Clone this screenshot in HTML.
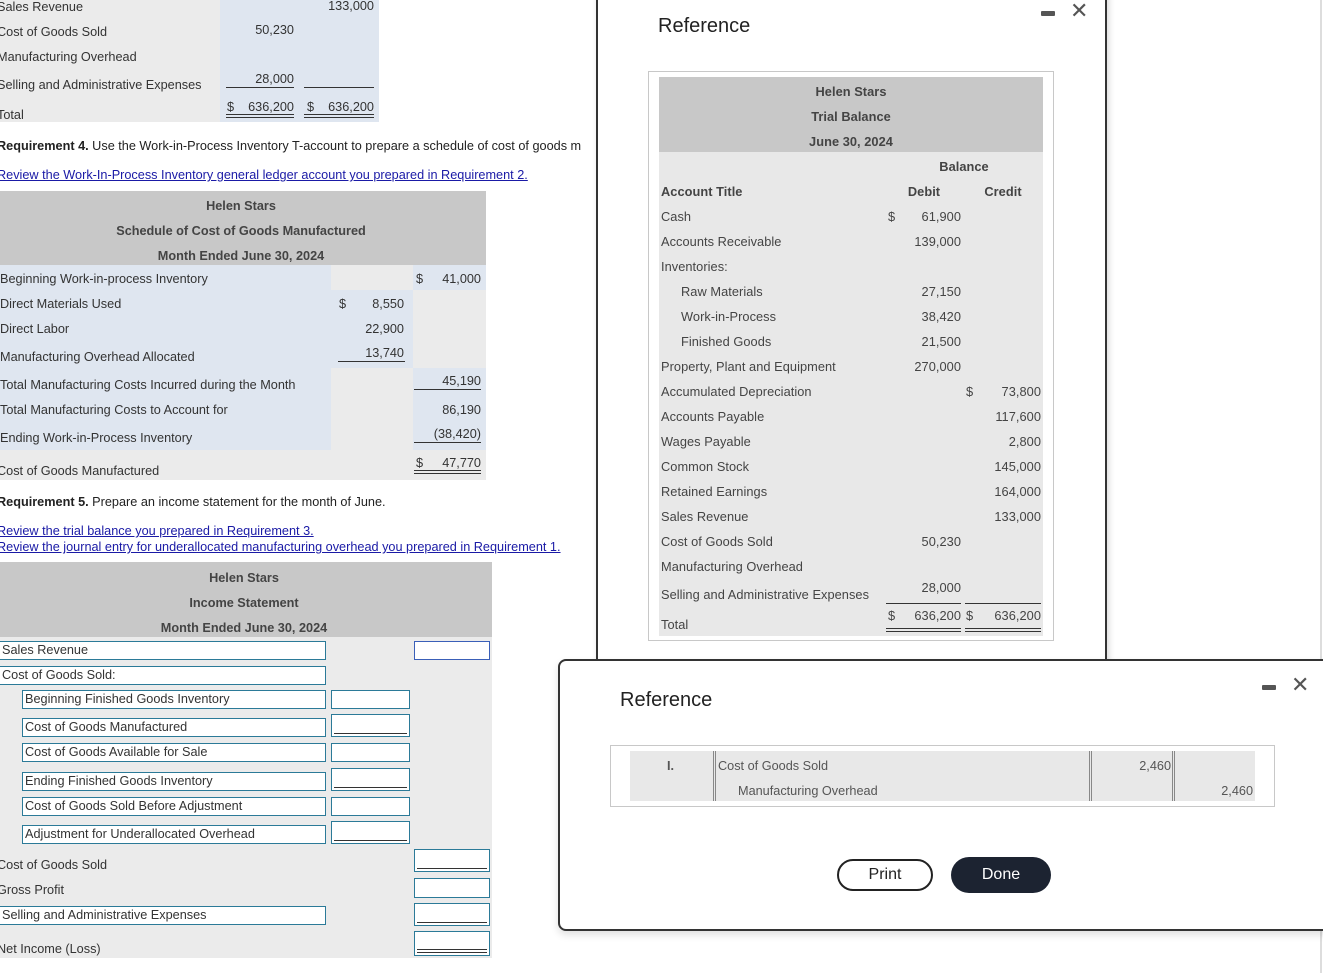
<!DOCTYPE html>
<html><head><meta charset="utf-8"><style>
*{margin:0;padding:0;box-sizing:border-box}
body{width:1323px;height:973px;position:relative;overflow:hidden;background:#fff;font-family:"Liberation Sans",Arial,sans-serif;font-size:12.7px;color:#333}
div{position:absolute}
.t{line-height:16px;white-space:nowrap}
.r{text-align:right}
.b{font-weight:bold}
.c{text-align:center}
.g{background:#ebebeb}
.bl{background:#dfe6f0}
.h{background:#c8c8c8}
.ln{height:1px;background:#333}
.dl{height:4px;border-top:1px solid #333;border-bottom:1px solid #333}
.a{color:#1a1aa6;text-decoration:underline}
.in{border:1px solid #2b7a98;background:#fff;height:19px;line-height:17px;padding-left:2px;white-space:nowrap;color:#333}
.inb{border:1px solid #3a5fb8;background:#fff}
.m .t{letter-spacing:0.05px;color:#444;font-size:12.8px}
</style></head><body>

<div class="g" style="left:0;top:0;width:220px;height:122px"></div>
<div class="bl" style="left:220px;top:0;width:159px;height:122px"></div>
<div class="t" style="left:-3px;top:-1px">Sales Revenue</div>
<div class="t" style="left:-3px;top:24px">Cost of Goods Sold</div>
<div class="t" style="left:-3px;top:49px">Manufacturing Overhead</div>
<div class="t" style="left:-3px;top:77px">Selling and Administrative Expenses</div>
<div class="t" style="left:-3px;top:107px">Total</div>
<div class="t r" style="left:300px;top:-2px;width:74px">133,000</div>
<div class="t r" style="left:220px;top:22px;width:74px">50,230</div>
<div class="t r" style="left:220px;top:71px;width:74px">28,000</div>
<div class="ln" style="left:226px;top:87px;width:68px"></div>
<div class="ln" style="left:304px;top:87px;width:70px"></div>
<div class="t" style="left:227px;top:99px">$</div>
<div class="t r" style="left:220px;top:99px;width:74px">636,200</div>
<div class="t" style="left:307px;top:99px">$</div>
<div class="t r" style="left:300px;top:99px;width:74px">636,200</div>
<div class="dl" style="left:226px;top:114px;width:68px"></div>
<div class="dl" style="left:304px;top:114px;width:70px"></div>

<div class="t" style="left:-3px;top:138px;color:#222"><b>Requirement 4.</b> Use the Work-in-Process Inventory T-account to prepare a schedule of cost of goods m</div>
<div class="t a" style="left:-3px;top:167px">Review the Work-In-Process Inventory general ledger account you prepared in Requirement 2.</div>

<div class="h" style="left:0;top:191px;width:486px;height:74px"></div>
<div class="t b c" style="left:0;top:198px;width:482px;color:#444">Helen Stars</div>
<div class="t b c" style="left:0;top:223px;width:482px;color:#444">Schedule of Cost of Goods Manufactured</div>
<div class="t b c" style="left:0;top:248px;width:482px;color:#444">Month Ended June 30, 2024</div>
<div class="bl" style="left:0;top:265px;width:331px;height:185px"></div>
<div class="g" style="left:0;top:450px;width:486px;height:30px"></div>
<div class="g" style="left:331px;top:265px;width:82px;height:25px"></div>
<div class="bl" style="left:331px;top:290px;width:82px;height:78px"></div>
<div class="g" style="left:331px;top:368px;width:82px;height:82px"></div>
<div class="bl" style="left:413px;top:265px;width:73px;height:25px"></div>
<div class="g" style="left:413px;top:290px;width:73px;height:78px"></div>
<div class="bl" style="left:413px;top:368px;width:73px;height:82px"></div>
<div class="t" style="left:0;top:271px">Beginning Work-in-process Inventory</div>
<div class="t" style="left:0;top:296px">Direct Materials Used</div>
<div class="t" style="left:0;top:321px">Direct Labor</div>
<div class="t" style="left:0;top:349px">Manufacturing Overhead Allocated</div>
<div class="t" style="left:0;top:377px">Total Manufacturing Costs Incurred during the Month</div>
<div class="t" style="left:0;top:402px">Total Manufacturing Costs to Account for</div>
<div class="t" style="left:0;top:430px">Ending Work-in-Process Inventory</div>
<div class="t" style="left:-3px;top:463px">Cost of Goods Manufactured</div>
<div class="t" style="left:416px;top:271px">$</div>
<div class="t r" style="left:420px;top:271px;width:61px">41,000</div>
<div class="t" style="left:339px;top:296px">$</div>
<div class="t r" style="left:340px;top:296px;width:64px">8,550</div>
<div class="t r" style="left:340px;top:321px;width:64px">22,900</div>
<div class="t r" style="left:340px;top:345px;width:64px">13,740</div>
<div class="ln" style="left:338px;top:361px;width:67px"></div>
<div class="t r" style="left:420px;top:373px;width:61px">45,190</div>
<div class="ln" style="left:414px;top:389px;width:67px"></div>
<div class="t r" style="left:420px;top:402px;width:61px">86,190</div>
<div class="t r" style="left:410px;top:426px;width:71px">(38,420)</div>
<div class="ln" style="left:414px;top:442px;width:67px"></div>
<div class="t" style="left:416px;top:455px">$</div>
<div class="t r" style="left:420px;top:455px;width:61px">47,770</div>
<div class="dl" style="left:414px;top:470px;width:67px"></div>

<div class="t" style="left:-3px;top:494px;color:#222"><b>Requirement 5.</b> Prepare an income statement for the month of June.</div>
<div class="t a" style="left:-3px;top:523px">Review the trial balance you prepared in Requirement 3.</div>
<div class="t a" style="left:-3px;top:539px">Review the journal entry for underallocated manufacturing overhead you prepared in Requirement 1.</div>

<div class="h" style="left:0;top:562px;width:492px;height:75px"></div>
<div class="t b c" style="left:0;top:570px;width:488px;color:#444">Helen Stars</div>
<div class="t b c" style="left:0;top:595px;width:488px;color:#444">Income Statement</div>
<div class="t b c" style="left:0;top:620px;width:488px;color:#444">Month Ended June 30, 2024</div>
<div class="g" style="left:0;top:637px;width:492px;height:321px"></div>
<div class="in" style="left:-1px;top:641px;width:327px">Sales Revenue</div>
<div class="inb" style="left:414px;top:641px;width:76px;height:19px"></div>
<div class="in" style="left:-1px;top:666px;width:327px">Cost of Goods Sold:</div>
<div class="in" style="left:22px;top:690px;width:304px">Beginning Finished Goods Inventory</div>
<div class="in" style="left:331px;top:690px;width:79px"></div>
<div class="in" style="left:22px;top:718px;width:304px">Cost of Goods Manufactured</div>
<div class="in" style="left:331px;top:714px;width:79px;height:23px"><div class="ln" style="left:2px;top:18px;width:73px"></div></div>
<div class="in" style="left:22px;top:743px;width:304px">Cost of Goods Available for Sale</div>
<div class="in" style="left:331px;top:743px;width:79px"></div>
<div class="in" style="left:22px;top:772px;width:304px">Ending Finished Goods Inventory</div>
<div class="in" style="left:331px;top:768px;width:79px;height:23px"><div class="ln" style="left:2px;top:18px;width:73px"></div></div>
<div class="in" style="left:22px;top:797px;width:304px">Cost of Goods Sold Before Adjustment</div>
<div class="in" style="left:331px;top:797px;width:79px"></div>
<div class="in" style="left:22px;top:825px;width:304px">Adjustment for Underallocated Overhead</div>
<div class="in" style="left:331px;top:821px;width:79px;height:23px"><div class="ln" style="left:2px;top:18px;width:73px"></div></div>
<div class="t" style="left:-3px;top:857px">Cost of Goods Sold</div>
<div class="in" style="left:414px;top:849px;width:76px;height:23px"><div class="ln" style="left:2px;top:18px;width:70px"></div></div>
<div class="t" style="left:-3px;top:882px">Gross Profit</div>
<div class="in" style="left:414px;top:878px;width:76px;height:20px"></div>
<div class="in" style="left:-1px;top:906px;width:327px">Selling and Administrative Expenses</div>
<div class="in" style="left:414px;top:903px;width:76px;height:23px"><div class="ln" style="left:2px;top:18px;width:70px"></div></div>
<div class="t" style="left:-3px;top:941px">Net Income (Loss)</div>
<div class="in" style="left:414px;top:931px;width:76px;height:25px"><div class="dl" style="left:2px;top:17px;width:70px"></div></div>

<div style="left:1320px;top:0;width:2px;height:973px;background:#ddd"></div>

<div style="left:596px;top:-10px;width:511px;height:680px;background:#fff;border:2px solid #333;box-shadow:2px 0 6px rgba(0,0,0,.15)"></div>
<div style="left:658px;top:15px;font-size:20px;color:#222">Reference</div>
<div style="left:1041px;top:11px;width:14px;height:5px;background:#555;border-radius:1px"></div>
<div style="left:1070px;top:-1px;font-size:22px;color:#555;line-height:24px">&#x2715;</div>
<div style="left:648px;top:71px;width:406px;height:570px;border:1px solid #c8c8c8"></div>
<div class="m" style="left:659px;top:77px;width:384px;height:559px;background:#e8e8e8">
<div class="h" style="left:0;top:0;width:384px;height:75px"></div>
<div class="t b c" style="left:0;top:7px;width:384px">Helen Stars</div>
<div class="t b c" style="left:0;top:32px;width:384px">Trial Balance</div>
<div class="t b c" style="left:0;top:57px;width:384px">June 30, 2024</div>
<div class="t b c" style="left:225px;top:82px;width:160px">Balance</div>
<div class="t b" style="left:2px;top:107px">Account Title</div>
<div class="t b c" style="left:230px;top:107px;width:70px">Debit</div>
<div class="t b c" style="left:306px;top:107px;width:76px">Credit</div>
<div class="t" style="left:2px;top:132px">Cash</div>
<div class="t" style="left:2px;top:157px">Accounts Receivable</div>
<div class="t" style="left:2px;top:182px">Inventories:</div>
<div class="t" style="left:22px;top:207px">Raw Materials</div>
<div class="t" style="left:22px;top:232px">Work-in-Process</div>
<div class="t" style="left:22px;top:257px">Finished Goods</div>
<div class="t" style="left:2px;top:282px">Property, Plant and Equipment</div>
<div class="t" style="left:2px;top:307px">Accumulated Depreciation</div>
<div class="t" style="left:2px;top:332px">Accounts Payable</div>
<div class="t" style="left:2px;top:357px">Wages Payable</div>
<div class="t" style="left:2px;top:382px">Common Stock</div>
<div class="t" style="left:2px;top:407px">Retained Earnings</div>
<div class="t" style="left:2px;top:432px">Sales Revenue</div>
<div class="t" style="left:2px;top:457px">Cost of Goods Sold</div>
<div class="t" style="left:2px;top:482px">Manufacturing Overhead</div>
<div class="t" style="left:2px;top:510px">Selling and Administrative Expenses</div>
<div class="t" style="left:2px;top:540px">Total</div>
<div class="t" style="left:229px;top:132px">$</div>
<div class="t r" style="left:222px;top:132px;width:80px">61,900</div>
<div class="t r" style="left:222px;top:157px;width:80px">139,000</div>
<div class="t r" style="left:222px;top:207px;width:80px">27,150</div>
<div class="t r" style="left:222px;top:232px;width:80px">38,420</div>
<div class="t r" style="left:222px;top:257px;width:80px">21,500</div>
<div class="t r" style="left:222px;top:282px;width:80px">270,000</div>
<div class="t r" style="left:222px;top:457px;width:80px">50,230</div>
<div class="t r" style="left:222px;top:503px;width:80px">28,000</div>
<div class="t" style="left:307px;top:307px">$</div>
<div class="t r" style="left:302px;top:307px;width:80px">73,800</div>
<div class="t r" style="left:302px;top:332px;width:80px">117,600</div>
<div class="t r" style="left:302px;top:357px;width:80px">2,800</div>
<div class="t r" style="left:302px;top:382px;width:80px">145,000</div>
<div class="t r" style="left:302px;top:407px;width:80px">164,000</div>
<div class="t r" style="left:302px;top:432px;width:80px">133,000</div>
<div class="ln" style="left:227px;top:526px;width:75px"></div>
<div class="ln" style="left:306px;top:526px;width:76px"></div>
<div class="t" style="left:229px;top:531px">$</div>
<div class="t r" style="left:222px;top:531px;width:80px">636,200</div>
<div class="t" style="left:307px;top:531px">$</div>
<div class="t r" style="left:302px;top:531px;width:80px">636,200</div>
<div class="dl" style="left:227px;top:551px;width:75px"></div>
<div class="dl" style="left:306px;top:551px;width:76px"></div>
</div>

<div style="left:558px;top:659px;width:790px;height:272px;background:#fff;border:2px solid #333;border-radius:8px;box-shadow:0 4px 8px rgba(0,0,0,.12)"></div>
<div style="left:620px;top:689px;font-size:20px;color:#222">Reference</div>
<div style="left:1262px;top:685px;width:14px;height:5px;background:#555;border-radius:1px"></div>
<div style="left:1291px;top:673px;font-size:22px;color:#555;line-height:24px">&#x2715;</div>
<div style="left:610px;top:745px;width:665px;height:62px;border:1px solid #c8c8c8"></div>
<div style="left:630px;top:751px;width:625px;height:50px;background:#e8e8e8"></div>
<div style="left:713px;top:751px;width:3px;height:50px;border-left:1px solid #888;border-right:1px solid #888"></div>
<div style="left:1089px;top:751px;width:3px;height:50px;border-left:1px solid #888;border-right:1px solid #888"></div>
<div style="left:1172px;top:751px;width:3px;height:50px;border-left:1px solid #888;border-right:1px solid #888"></div>
<div class="t b" style="left:667px;top:758px;color:#555">I.</div>
<div class="t" style="left:718px;top:758px;color:#555">Cost of Goods Sold</div>
<div class="t" style="left:738px;top:783px;color:#555">Manufacturing Overhead</div>
<div class="t r" style="left:1100px;top:758px;width:71px;color:#555">2,460</div>
<div class="t r" style="left:1180px;top:783px;width:73px;color:#555">2,460</div>
<div style="left:837px;top:859px;width:96px;height:32px;border:2px solid #222;border-radius:16px;text-align:center;line-height:28px;font-size:16px;color:#222">Print</div>
<div style="left:951px;top:857px;width:100px;height:36px;background:#1c2331;border-radius:18px;text-align:center;line-height:36px;font-size:16px;color:#fff">Done</div>
</body></html>
